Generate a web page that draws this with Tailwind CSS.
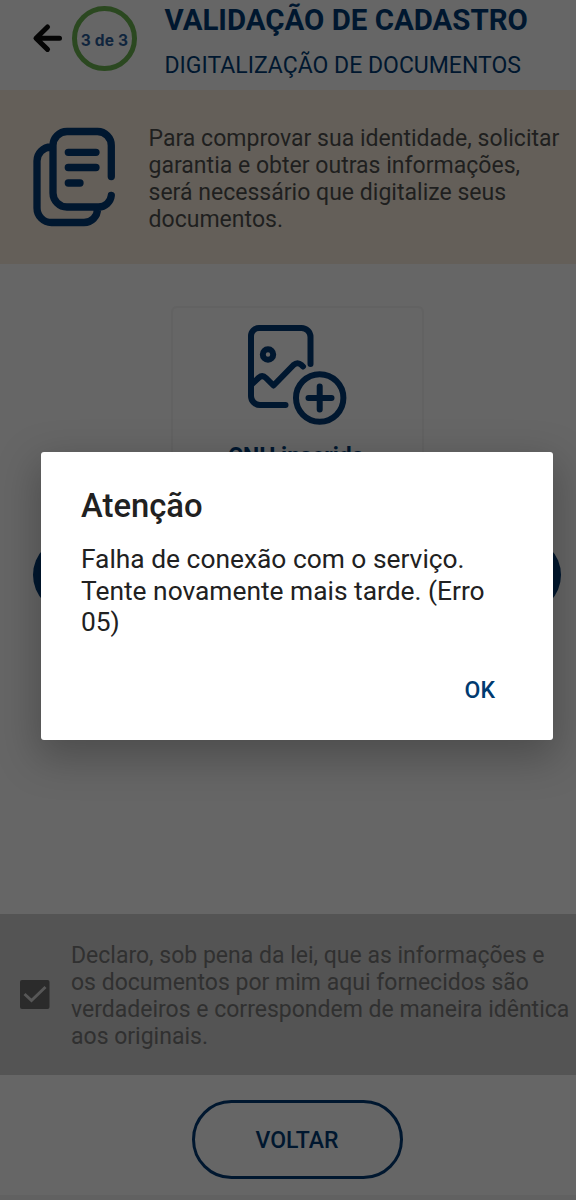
<!DOCTYPE html>
<html lang="pt-BR">
<head>
<meta charset="utf-8">
<title>Validação de Cadastro</title>
<script src="https://cdn.jsdelivr.net/npm/@tailwindcss/browser@4"></script>
</head>
<body class="bg-[#666666]">
<div class="relative flex h-[1200px] w-[576px] flex-col overflow-hidden bg-[#666666] font-['Roboto',sans-serif] text-[#00172f]">
  <header class="flex h-[90px] shrink-0 pl-[32px]">
    <svg class="mt-[23px] h-[30px] w-[31px] shrink-0" viewBox="0 0 31 30" fill="none" stroke="#050505" stroke-width="5" stroke-linecap="round" stroke-linejoin="round"><path d="M27.500 15.200H5M15.500 4L4 15.200l11.500 11.200"/></svg>
    <div class="mt-[6px] ml-[9px] flex h-[65px] w-[65px] shrink-0 items-center justify-center rounded-full border-[5px] border-[#2b4820] pt-[4px] font-['Inter',sans-serif] text-[15.500px] font-bold tracking-[0.150px] whitespace-nowrap text-[#10253d]">3 de 3</div>
    <div class="ml-[27.500px] whitespace-nowrap">
      <h1 class="mt-[3px] text-[29.450px] leading-[34px] font-bold">VALIDAÇÃO DE CADASTRO</h1>
      <p class="mt-[15px] text-[23px] leading-[28px]">DIGITALIZAÇÃO DE DOCUMENTOS</p>
    </div>
  </header>

  <section class="flex h-[174px] shrink-0 bg-[#645f59] pl-[32px]">
    <svg class="mt-[36px] h-[102px] w-[84px] shrink-0" viewBox="0 0 84 102" fill="none" stroke="#00172f" stroke-width="7.300" stroke-linecap="round"><path d="M79.300 50.500V19.500A14 14 0 0 0 65.500 5.500H35A14 14 0 0 0 21 19.500V67A14 14 0 0 0 35 81H66.500A12.800 12.800 0 0 0 79.300 69.500M19 21A14 14 0 0 0 5 35V82A14.500 14.500 0 0 0 19.500 96.500H52A13.500 13.500 0 0 0 65.500 83M36.300 26.300H64M36.300 41.500H64M36.300 57H48"/></svg>
    <p class="mt-[35px] ml-[32.500px] text-[23.050px] leading-[27px] whitespace-nowrap text-[#1f1f1f]">Para comprovar sua identidade, solicitar<br>garantia e obter outras informações,<br>será necessário que digitalize seus<br>documentos.</p>
  </section>

  <main class="flex h-[650px] shrink-0 flex-col items-center">
    <div class="mt-[42px] mr-[-18px] flex h-[190px] w-[253px] flex-col items-center rounded-[6px] border-2 border-[#626262]">
      <svg class="mt-[16px] mr-[1px] h-[102px] w-[102px]" viewBox="0 0 102 102" fill="none" stroke="#00172f" stroke-width="6" stroke-linecap="round" stroke-linejoin="round"><path d="M64.500 40V13A9 9 0 0 0 55.500 4H13A8 8 0 0 0 5 12V72A9 9 0 0 0 14 81H39.500M6 60L13 53.500Q16.500 50.500 20 54L27.500 61.500L47.500 41Q51.500 37.500 55.500 41L57 42.500"/><circle cx="22" cy="30.500" r="5.200"/><circle cx="73.700" cy="74" r="23.700"/><path d="M62.500 74H85.500M73.700 62.500V85.500"/></svg>
      <p class="mt-[18px] mr-[2px] text-[23px] leading-[26px] font-bold whitespace-nowrap">CNH inserida</p>
    </div>
    <div class="mt-[41px] mr-[-18px] h-[76px] w-[528px] shrink-0 rounded-full bg-[#00172f]"></div>
  </main>

  <section class="flex h-[161px] shrink-0 bg-[#545454] pl-[20px]">
    <svg class="mt-[66px] h-[30px] w-[30px] shrink-0" viewBox="0 0 30 30"><rect width="29.500" height="29" rx="2" fill="#2b2b2b"/><path d="M4.500 14L11.500 20.500L25.500 7" fill="none" stroke="#575757" stroke-width="3"/></svg>
    <p class="mt-[28px] ml-[21px] text-[23px] leading-[27px] whitespace-nowrap text-[#303030]">Declaro, sob pena da lei, que as informações e<br>os documentos por mim aqui fornecidos são<br>verdadeiros e correspondem de maneira idêntica<br>aos originais.</p>
  </section>

  <footer class="flex grow flex-col items-center border-b-[5px] border-[#616161]">
    <button class="mt-[25px] mr-[-18px] h-[79px] w-[211px] rounded-full border-[3px] border-[#00172f] pt-[3px] text-[23px] font-medium">VOLTAR</button>
  </footer>

  <div role="dialog" class="absolute top-[452px] left-[41px] flex h-[288px] w-[512px] flex-col rounded-[3px] bg-white pt-[35px] pl-[40px] shadow-[0_14px_40px_4px_rgba(0,0,0,0.25)]">
    <h2 class="text-[32.800px] leading-[39px] font-medium text-[#212121]">Atenção</h2>
    <p class="mt-[18px] text-[26.350px] leading-[31.500px] whitespace-nowrap text-[#212121]">Falha de conexão com o serviço.<br>Tente novamente mais tarde. (Erro<br>05)</p>
    <button class="mt-[38px] mr-[58px] self-end text-[23px] leading-[28px] font-medium text-[#003a70]">OK</button>
  </div>
</div>
</body>
</html>
